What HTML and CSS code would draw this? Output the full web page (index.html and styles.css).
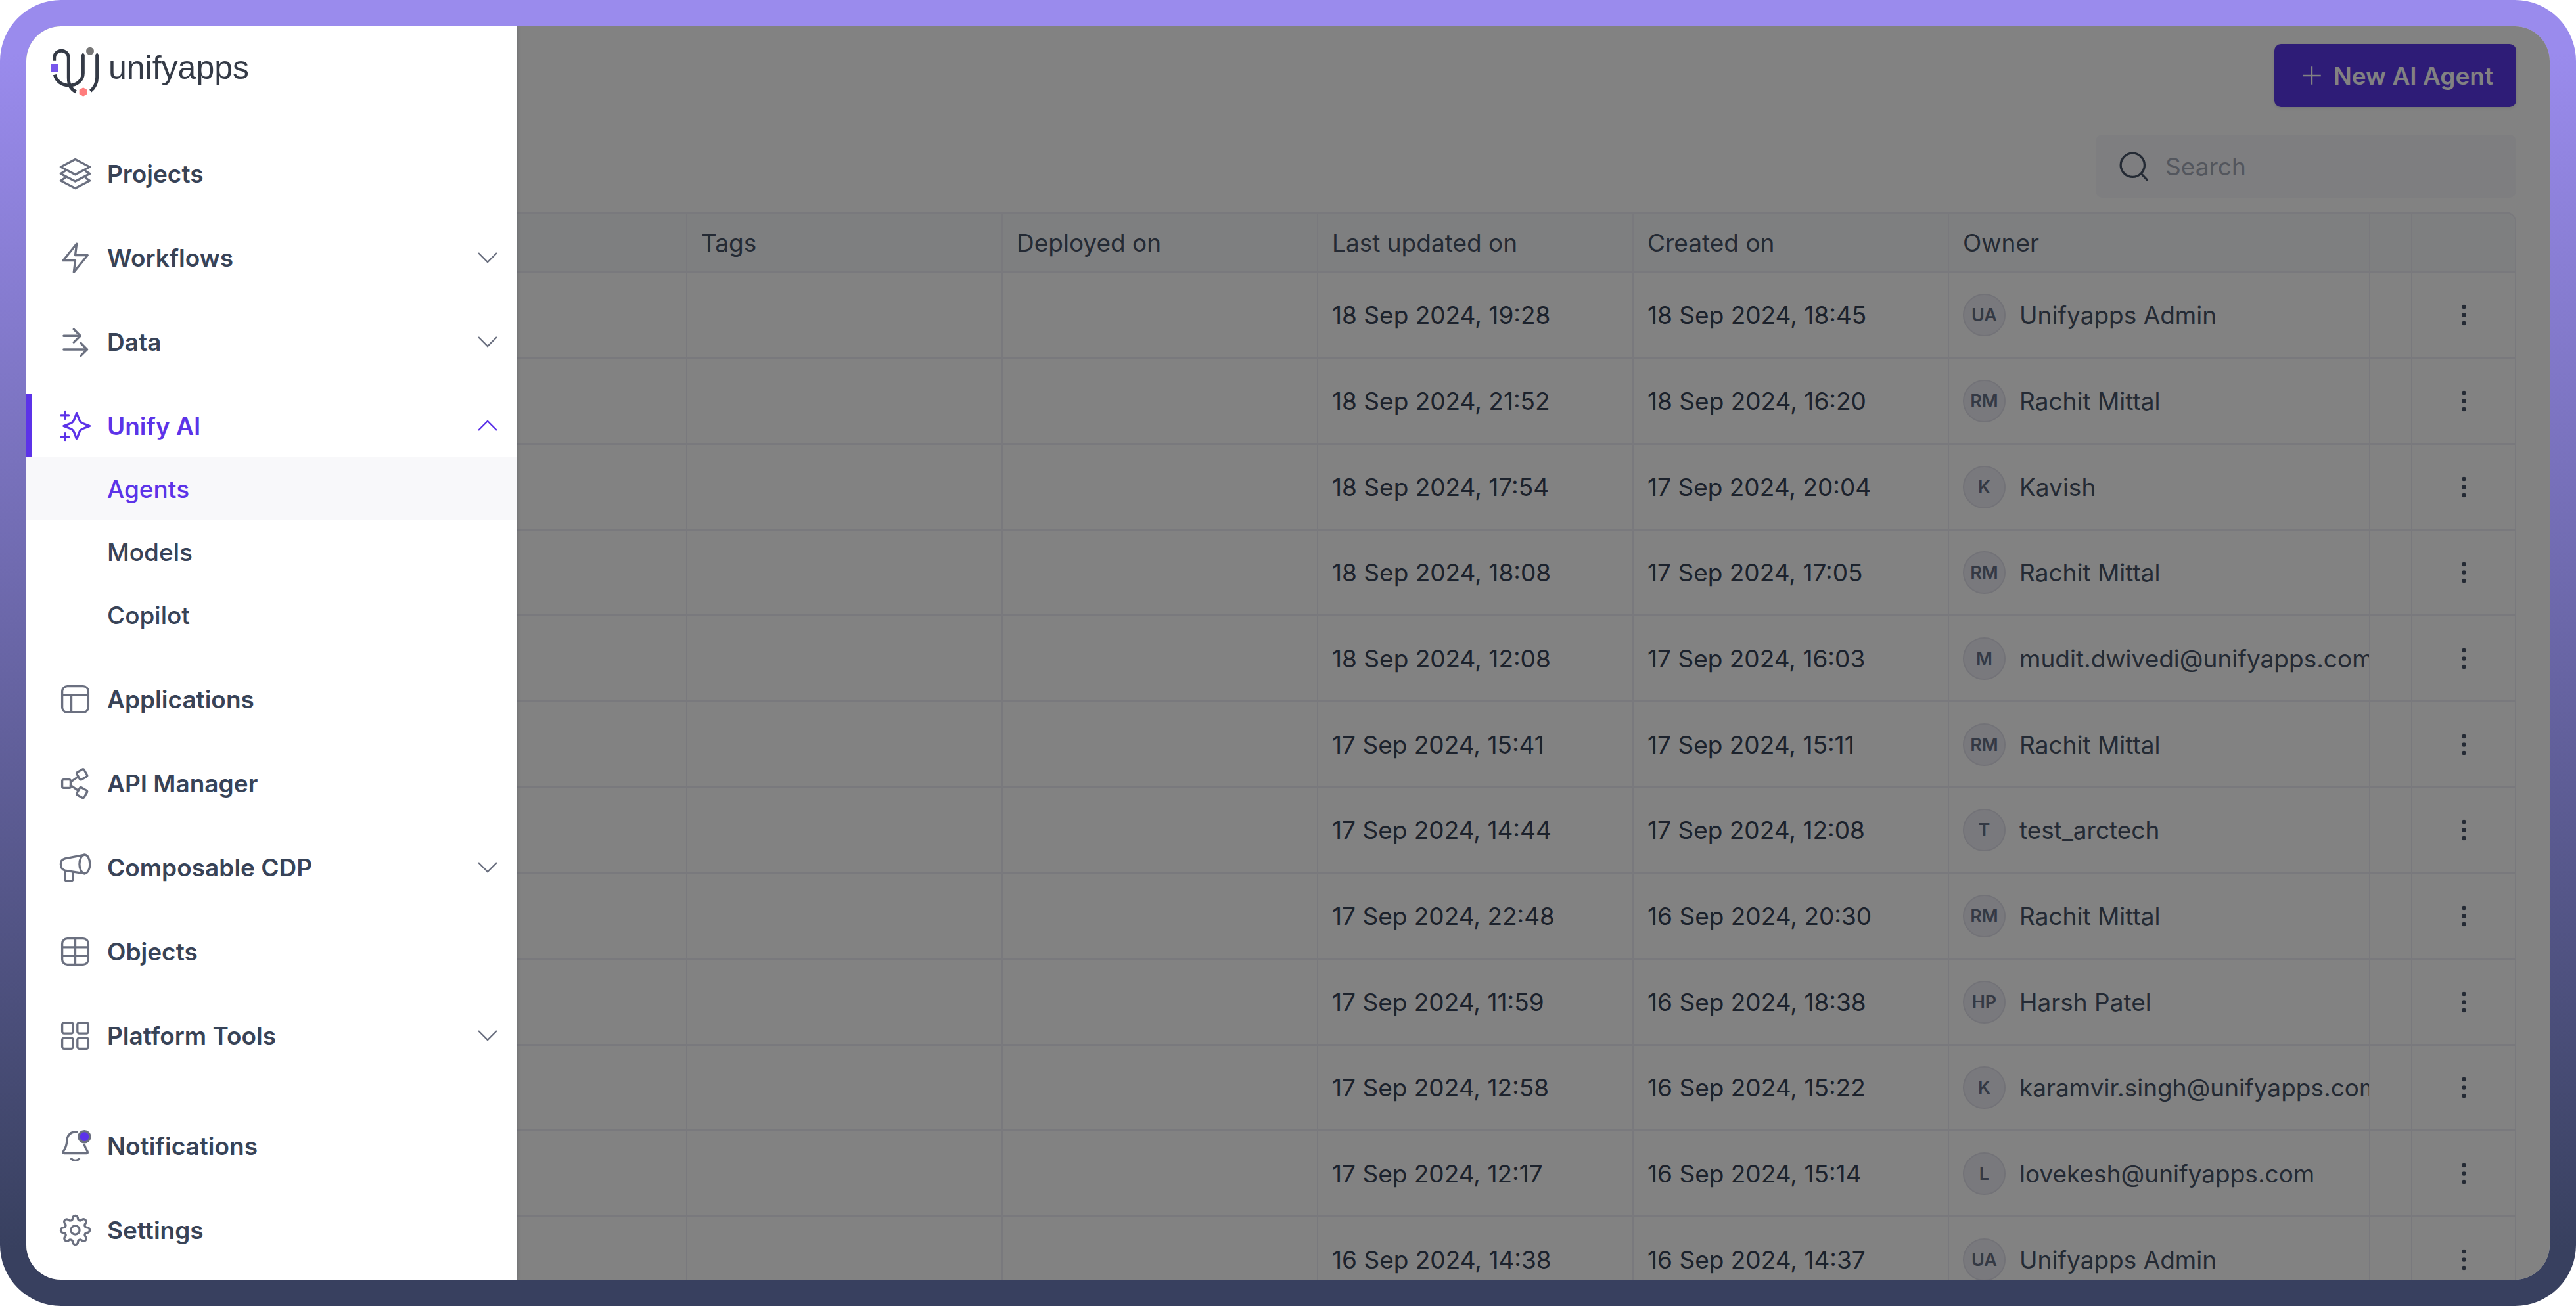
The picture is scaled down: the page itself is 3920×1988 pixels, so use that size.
FILE: index.html
```html
<!DOCTYPE html>
<html lang="en">
<head>
    <meta charset="UTF-8">
    <meta name="viewport" content="width=device-width, initial-scale=1.0">
    <title>AI Agents - unifyapps</title>
    <link rel="stylesheet" href="styles.css">
</head>
<body>
    <svg class="sprite" aria-hidden="true">
        <symbol id="chevron" viewBox="0 0 24 24"><path d="M5 8.5l7 7 7-7"/></symbol>
        <symbol id="dots" viewBox="0 0 24 24"><circle cx="12" cy="5" r="1.8"/><circle cx="12" cy="12" r="1.8"/><circle cx="12" cy="19" r="1.8"/></symbol>
    </svg>
    <div class="frame">
        <div class="window">
            <main class="content">
                <div class="topbar">
                    <button class="btn-primary" type="button">
                        <svg class="plus" viewBox="0 0 24 24"><path d="M12 4.5v15M4.5 12h15"/></svg>
                        New AI Agent
                    </button>
                </div>
                <div class="toolbar">
                    <label class="search">
                        <svg class="icon" viewBox="0 0 24 24"><circle cx="11" cy="11" r="8.2"/><path d="M17 17l4 4.2"/></svg>
                        <input type="search" placeholder="Search" aria-label="Search">
                    </label>
                </div>
                <div class="table-wrap">
                    <table>
                        <colgroup>
                            <col>
                            <col class="col-date">
                            <col class="col-date">
                            <col class="col-date">
                            <col class="col-date">
                            <col class="col-owner">
                            <col class="col-gap">
                            <col class="col-menu">
                        </colgroup>
                        <thead>
                            <tr><th></th><th>Tags</th><th>Deployed on</th><th>Last updated on</th><th>Created on</th><th>Owner</th><th></th><th></th></tr>
                        </thead>
                        <tbody>
                            <tr><td></td><td></td><td></td><td>18 Sep 2024, 19:28</td><td>18 Sep 2024, 18:45</td><td><div class="owner"><span class="avatar">UA</span>Unifyapps Admin</div></td><td></td><td><button class="menu" type="button" aria-label="More"><svg><use href="#dots"/></svg></button></td></tr>
                            <tr><td></td><td></td><td></td><td>18 Sep 2024, 21:52</td><td>18 Sep 2024, 16:20</td><td><div class="owner"><span class="avatar">RM</span>Rachit Mittal</div></td><td></td><td><button class="menu" type="button" aria-label="More"><svg><use href="#dots"/></svg></button></td></tr>
                            <tr><td></td><td></td><td></td><td>18 Sep 2024, 17:54</td><td>17 Sep 2024, 20:04</td><td><div class="owner"><span class="avatar">K</span>Kavish</div></td><td></td><td><button class="menu" type="button" aria-label="More"><svg><use href="#dots"/></svg></button></td></tr>
                            <tr><td></td><td></td><td></td><td>18 Sep 2024, 18:08</td><td>17 Sep 2024, 17:05</td><td><div class="owner"><span class="avatar">RM</span>Rachit Mittal</div></td><td></td><td><button class="menu" type="button" aria-label="More"><svg><use href="#dots"/></svg></button></td></tr>
                            <tr><td></td><td></td><td></td><td>18 Sep 2024, 12:08</td><td>17 Sep 2024, 16:03</td><td><div class="owner"><span class="avatar">M</span>mudit.dwivedi@unifyapps.com</div></td><td></td><td><button class="menu" type="button" aria-label="More"><svg><use href="#dots"/></svg></button></td></tr>
                            <tr><td></td><td></td><td></td><td>17 Sep 2024, 15:41</td><td>17 Sep 2024, 15:11</td><td><div class="owner"><span class="avatar">RM</span>Rachit Mittal</div></td><td></td><td><button class="menu" type="button" aria-label="More"><svg><use href="#dots"/></svg></button></td></tr>
                            <tr><td></td><td></td><td></td><td>17 Sep 2024, 14:44</td><td>17 Sep 2024, 12:08</td><td><div class="owner"><span class="avatar">T</span>test_arctech</div></td><td></td><td><button class="menu" type="button" aria-label="More"><svg><use href="#dots"/></svg></button></td></tr>
                            <tr><td></td><td></td><td></td><td>17 Sep 2024, 22:48</td><td>16 Sep 2024, 20:30</td><td><div class="owner"><span class="avatar">RM</span>Rachit Mittal</div></td><td></td><td><button class="menu" type="button" aria-label="More"><svg><use href="#dots"/></svg></button></td></tr>
                            <tr><td></td><td></td><td></td><td>17 Sep 2024, 11:59</td><td>16 Sep 2024, 18:38</td><td><div class="owner"><span class="avatar">HP</span>Harsh Patel</div></td><td></td><td><button class="menu" type="button" aria-label="More"><svg><use href="#dots"/></svg></button></td></tr>
                            <tr><td></td><td></td><td></td><td>17 Sep 2024, 12:58</td><td>16 Sep 2024, 15:22</td><td><div class="owner"><span class="avatar">K</span>karamvir.singh@unifyapps.com</div></td><td></td><td><button class="menu" type="button" aria-label="More"><svg><use href="#dots"/></svg></button></td></tr>
                            <tr><td></td><td></td><td></td><td>17 Sep 2024, 12:17</td><td>16 Sep 2024, 15:14</td><td><div class="owner"><span class="avatar">L</span>lovekesh@unifyapps.com</div></td><td></td><td><button class="menu" type="button" aria-label="More"><svg><use href="#dots"/></svg></button></td></tr>
                            <tr><td></td><td></td><td></td><td>16 Sep 2024, 14:38</td><td>16 Sep 2024, 14:37</td><td><div class="owner"><span class="avatar">UA</span>Unifyapps Admin</div></td><td></td><td><button class="menu" type="button" aria-label="More"><svg><use href="#dots"/></svg></button></td></tr>
                        </tbody>
                    </table>
                </div>
            </main>

            <div class="backdrop"></div>

            <aside class="drawer">
                <a class="logo" href="#">
                    <svg class="logo-mark" viewBox="0 0 270 270">
                        <g fill="none" stroke="#343a46" stroke-width="15">
                            <path d="M38 92V78a32 32 0 0 1 65 0v90c0 36 8 50 34 66"/>
                            <path d="M169 62v86c0 32-28 56-62 56-36 0-60-20-67-49"/>
                            <path d="M233 62v104c0 28-10 48-30 64"/>
                        </g>
                        <path d="M161 66l8-13 8 13zM225 66l8-13 8 13z" fill="#343a46"/>
                        <circle cx="201" cy="47" r="18" fill="#777"/>
                        <rect x="22" y="107" width="32" height="34" fill="#7857ec"/>
                        <path d="M170 214l18 10v20l-18 10-18-10v-20z" fill="#ff7d7d"/>
                    </svg>
                    <span class="wordmark">unifyapps</span>
                </a>
                <nav class="nav">
                    <a class="item" href="#">
                        <svg class="icon" viewBox="0 0 24 24"><path d="M12 2L2 7.3l10 5.3 10-5.3zM4.7 10.2L2 12l10 5.2L22 12l-2.700-1.800M4.700 15L2 16.800 12 22l10-5.200-2.700-1.800"/></svg>
                        Projects
                    </a>
                    <button class="item" type="button">
                        <svg class="icon" viewBox="0 0 24 24"><path d="M13 2.3L3.600 13.900H12l-1 8 9.500-11.700H12z"/></svg>
                        Workflows
                        <svg class="chevron"><use href="#chevron"/></svg>
                    </button>
                    <button class="item" type="button">
                        <svg class="icon" viewBox="0 0 24 24"><path d="M4 7.8h11M11 3.300l4.500 4.500-4.500 4.500M4 17.200h16M15.700 12.700l4.500 4.500-4.500 4.500"/></svg>
                        Data
                        <svg class="chevron"><use href="#chevron"/></svg>
                    </button>
                    <button class="item active" type="button" aria-expanded="true">
                        <svg class="icon" viewBox="0 0 24 24"><path d="M13 3l1.700 4.500c.5 1.500 1.200 2.200 2.600 2.700L22 12l-4.700 1.800c-1.400.5-2.100 1.200-2.600 2.700L13 21l-1.700-4.500c-.5-1.500-1.200-2.200-2.600-2.700L4 12l4.700-1.800c1.400-.5 2.100-1.200 2.600-2.700zM5 2v5M2.200 4.500h5.300M5 17v5M2.200 19.500h5.300"/></svg>
                        Unify AI
                        <svg class="chevron up"><use href="#chevron"/></svg>
                    </button>
                    <div class="subnav">
                        <a class="selected" href="#">Agents</a>
                        <a href="#">Models</a>
                        <a href="#">Copilot</a>
                    </div>
                    <a class="item" href="#">
                        <svg class="icon" viewBox="0 0 24 24"><rect x="3" y="3" width="18" height="18" rx="3.5"/><path d="M3 9h18M9.300 9v12"/></svg>
                        Applications
                    </a>
                    <a class="item" href="#">
                        <svg class="icon" viewBox="0 0 24 24"><rect x="3" y="9.300" width="5.800" height="5.800" rx="1"/><rect x="13.700" y="2.900" width="5.800" height="5.800" rx="1" transform="rotate(-30 16.600 5.800)"/><rect x="13.700" y="15.500" width="5.800" height="5.800" rx="1" transform="rotate(30 16.600 18.400)"/><path d="M8.800 11l4.700-3.300M8.800 13.300l4.700 3.300"/></svg>
                        API Manager
                    </a>
                    <button class="item" type="button">
                        <svg class="icon" viewBox="0 0 24 24"><ellipse cx="18.500" cy="9.700" rx="3.600" ry="6.500"/><path d="M18.500 3.200L5 5.800C3 6.300 2 7.700 2 9.700s1 3.900 3 4.400l13.500 2.100M5 14.200v6.100q0 .8.800.8h3.700q.8 0 .8-.8v-5.300"/></svg>
                        Composable CDP
                        <svg class="chevron"><use href="#chevron"/></svg>
                    </button>
                    <a class="item" href="#">
                        <svg class="icon" viewBox="0 0 24 24"><rect x="3" y="3" width="18" height="18" rx="3.5"/><path d="M3 9h18M3 15h18M12 3v18"/></svg>
                        Objects
                    </a>
                    <button class="item" type="button">
                        <svg class="icon" viewBox="0 0 24 24"><rect x="3" y="3" width="7.5" height="7.5" rx="1.3"/><rect x="13.5" y="3" width="7.5" height="7.5" rx="1.3"/><rect x="3" y="13.5" width="7.5" height="7.5" rx="1.3"/><rect x="13.5" y="13.5" width="7.5" height="7.5" rx="1.3"/></svg>
                        Platform Tools
                        <svg class="chevron"><use href="#chevron"/></svg>
                    </button>
                </nav>
                <div class="nav nav-bottom">
                    <a class="item" href="#">
                        <svg class="icon" viewBox="0 0 24 24"><path d="M13.2 2.200C9 1.800 6.500 4.500 6.300 8c-.2 3.600-1 5.600-2.300 7.300-.6 1-.5 1.700.4 1.700h15.300c.9 0 1.200-.6.600-1.600-.8-1.200-1.500-2.500-2-4.200M9.300 20.800c1.400 1.500 4 1.500 5.400 0"/><circle cx="18.300" cy="5.500" r="3.900" fill="#5c33e8"/></svg>
                        Notifications
                    </a>
                    <a class="item" href="#">
                        <svg class="icon" viewBox="0 0 24 24"><circle cx="12" cy="12" r="3"/><path stroke-width="1.65" transform="translate(1.09 1.09) scale(.909)" d="M19.4 15a1.65 1.65 0 0 0 .33 1.82l.06.06a2 2 0 0 1 0 2.83 2 2 0 0 1-2.83 0l-.06-.06a1.65 1.65 0 0 0-1.82-.33 1.65 1.65 0 0 0-1 1.51V21a2 2 0 0 1-2 2 2 2 0 0 1-2-2v-.09A1.65 1.65 0 0 0 9 19.4a1.65 1.65 0 0 0-1.82.33l-.06.06a2 2 0 0 1-2.83 0 2 2 0 0 1 0-2.83l.06-.06a1.65 1.65 0 0 0 .33-1.82 1.65 1.65 0 0 0-1.51-1H3a2 2 0 0 1-2-2 2 2 0 0 1 2-2h.09A1.65 1.65 0 0 0 4.6 9a1.65 1.65 0 0 0-.33-1.82l-.06-.06a2 2 0 0 1 0-2.83 2 2 0 0 1 2.83 0l.06.06a1.65 1.65 0 0 0 1.82.33H9a1.65 1.65 0 0 0 1-1.51V3a2 2 0 0 1 2-2 2 2 0 0 1 2 2v.09a1.65 1.65 0 0 0 1 1.51 1.65 1.65 0 0 0 1.82-.33l.06-.06a2 2 0 0 1 2.83 0 2 2 0 0 1 0 2.83l-.06.06a1.65 1.65 0 0 0-.33 1.82V9a1.65 1.65 0 0 0 1.51 1H21a2 2 0 0 1 2 2 2 2 0 0 1-2 2h-.09a1.65 1.65 0 0 0-1.51 1z"/></svg>
                        Settings
                    </a>
                </div>
            </aside>
        </div>
    </div>
</body>
</html>
```
FILE: styles.css
```css
* {
    box-sizing: border-box;
}

body {
    margin: 0;
    background: #fff;
    font-family: Inter, "Liberation Sans", sans-serif;
    font-size: 37px;
    line-height: 53px;
    color: #384357;
}

a {
    color: inherit;
    text-decoration: none;
}

button {
    font: inherit;
    color: inherit;
    background: none;
    border: none;
    padding: 0;
    cursor: pointer;
}

.sprite {
    display: none;
}

.frame {
    height: 100vh;
    padding: 40px;
    border-radius: 93px;
    background: linear-gradient(#9a8bed 80px, #38405f 1900px);
}

.window {
    position: relative;
    height: 100%;
    overflow: hidden;
    border-radius: 53px;
    background: #fff;
}

/* page behind the drawer */
.content {
    padding: 27px 51px 0 160px;
}

.topbar,
.toolbar {
    display: flex;
    justify-content: flex-end;
}

.toolbar {
    margin: 42px 0 21px;
}

.btn-primary {
    display: flex;
    align-items: center;
    gap: 11px;
    height: 96px;
    padding: 0 35px;
    border-radius: 10px;
    background: #5b37ea;
    color: #fff;
    font-weight: 600;
    box-shadow: 0 2px 4px rgba(16, 24, 40, 0.1);
}

.icon {
    width: 53px;
    height: 53px;
    flex: none;
    fill: none;
    stroke: currentColor;
    stroke-width: 1.5;
    stroke-linecap: round;
    stroke-linejoin: round;
}

.plus {
    width: 44px;
    height: 44px;
    fill: none;
    stroke: currentColor;
    stroke-width: 1.3;
}

.search {
    display: flex;
    align-items: center;
    gap: 21px;
    width: 640px;
    height: 96px;
    padding: 0 32px;
    border-radius: 10px;
    background: #f7f7fb;
}

.search .icon {
    color: #475467;
}

.search input {
    flex: 1;
    min-width: 0;
    padding: 0;
    border: none;
    outline: none;
    background: none;
    font: inherit;
}

.search input::placeholder {
    color: #a4a9b6;
    opacity: 1;
}

.table-wrap {
    border: 3px solid #eeedf5;
    border-right-width: 2px;
    border-radius: 16px;
    overflow: hidden;
}

table {
    width: 100%;
    table-layout: fixed;
    border-collapse: separate;
    border-spacing: 0;
}

.col-date {
    width: 480px;
}

.col-owner {
    width: 641px;
}

.col-gap {
    width: 64px;
}

.col-menu {
    width: 156px;
}

th,
td {
    padding: 0 0 0 21px;
    border-right: 2px solid #eeedf5;
    border-bottom: 3px solid #eeedf5;
    text-align: left;
    white-space: nowrap;
    overflow: hidden;
}

th:last-child,
td:last-child {
    border-right: none;
    padding: 0;
    text-align: center;
}

th {
    height: 91px;
    background: #f8fafc;
    color: #475467;
    font-weight: 400;
}

td {
    height: 131px;
}

tr:nth-child(3n+1) td {
    height: 130px;
}

.owner {
    display: flex;
    align-items: center;
    gap: 21px;
    color: #475467;
}

.avatar {
    display: flex;
    align-items: center;
    justify-content: center;
    flex: none;
    width: 65px;
    height: 65px;
    border: 2px solid #e0e0ea;
    border-radius: 50%;
    background: #eeedf6;
    color: #667085;
    font-size: 27px;
    font-weight: 600;
}

.menu {
    display: block;
    width: 43px;
    height: 43px;
    margin: 0 auto;
}

.menu svg {
    display: block;
    width: 43px;
    height: 43px;
    fill: #475467;
}

.backdrop {
    position: absolute;
    inset: 0;
    background: rgba(0, 0, 0, 0.49);
}

/* navigation drawer, lies over the page */
.drawer {
    position: absolute;
    top: 0;
    bottom: 0;
    left: 0;
    display: flex;
    flex-direction: column;
    width: 746px;
    padding-bottom: 28px;
    background: #fff;
    box-shadow: 0 0 6px rgba(16, 24, 40, 0.3);
}

.logo {
    display: flex;
    align-items: center;
    gap: 5px;
    height: 176px;
    padding: 0 30px 42px;
    color: #343a46;
}

.logo-mark {
    width: 90px;
    height: 90px;
}

.wordmark {
    padding-bottom: 8px;
    font-family: "Liberation Sans", Arial, sans-serif;
    font-size: 50px;
}

.nav {
    display: flex;
    flex-direction: column;
    gap: 32px;
}

.nav-bottom {
    margin-top: auto;
}

.item {
    display: flex;
    align-items: center;
    gap: 22px;
    height: 96px;
    padding: 0 20px 0 48px;
    font-weight: 600;
    text-align: left;
}

.item .icon {
    color: #6b7080;
}

.chevron {
    width: 48px;
    height: 48px;
    margin-left: auto;
    fill: none;
    stroke: #6b7080;
    stroke-width: 1.2;
}

.chevron.up {
    transform: rotate(180deg);
    stroke: #5c33e8;
}

.item.active {
    color: #5c33e8;
    box-shadow: inset 8px 0 #5c33e8;
}

.item.active .icon {
    color: #5c33e8;
}

.subnav {
    margin-top: -32px;
    font-weight: 500;
}

.subnav a {
    display: flex;
    align-items: center;
    height: 96px;
    padding-left: 123px;
}

.subnav .selected {
    background: #f8f8fa;
    color: #5c33e8;
}
```
